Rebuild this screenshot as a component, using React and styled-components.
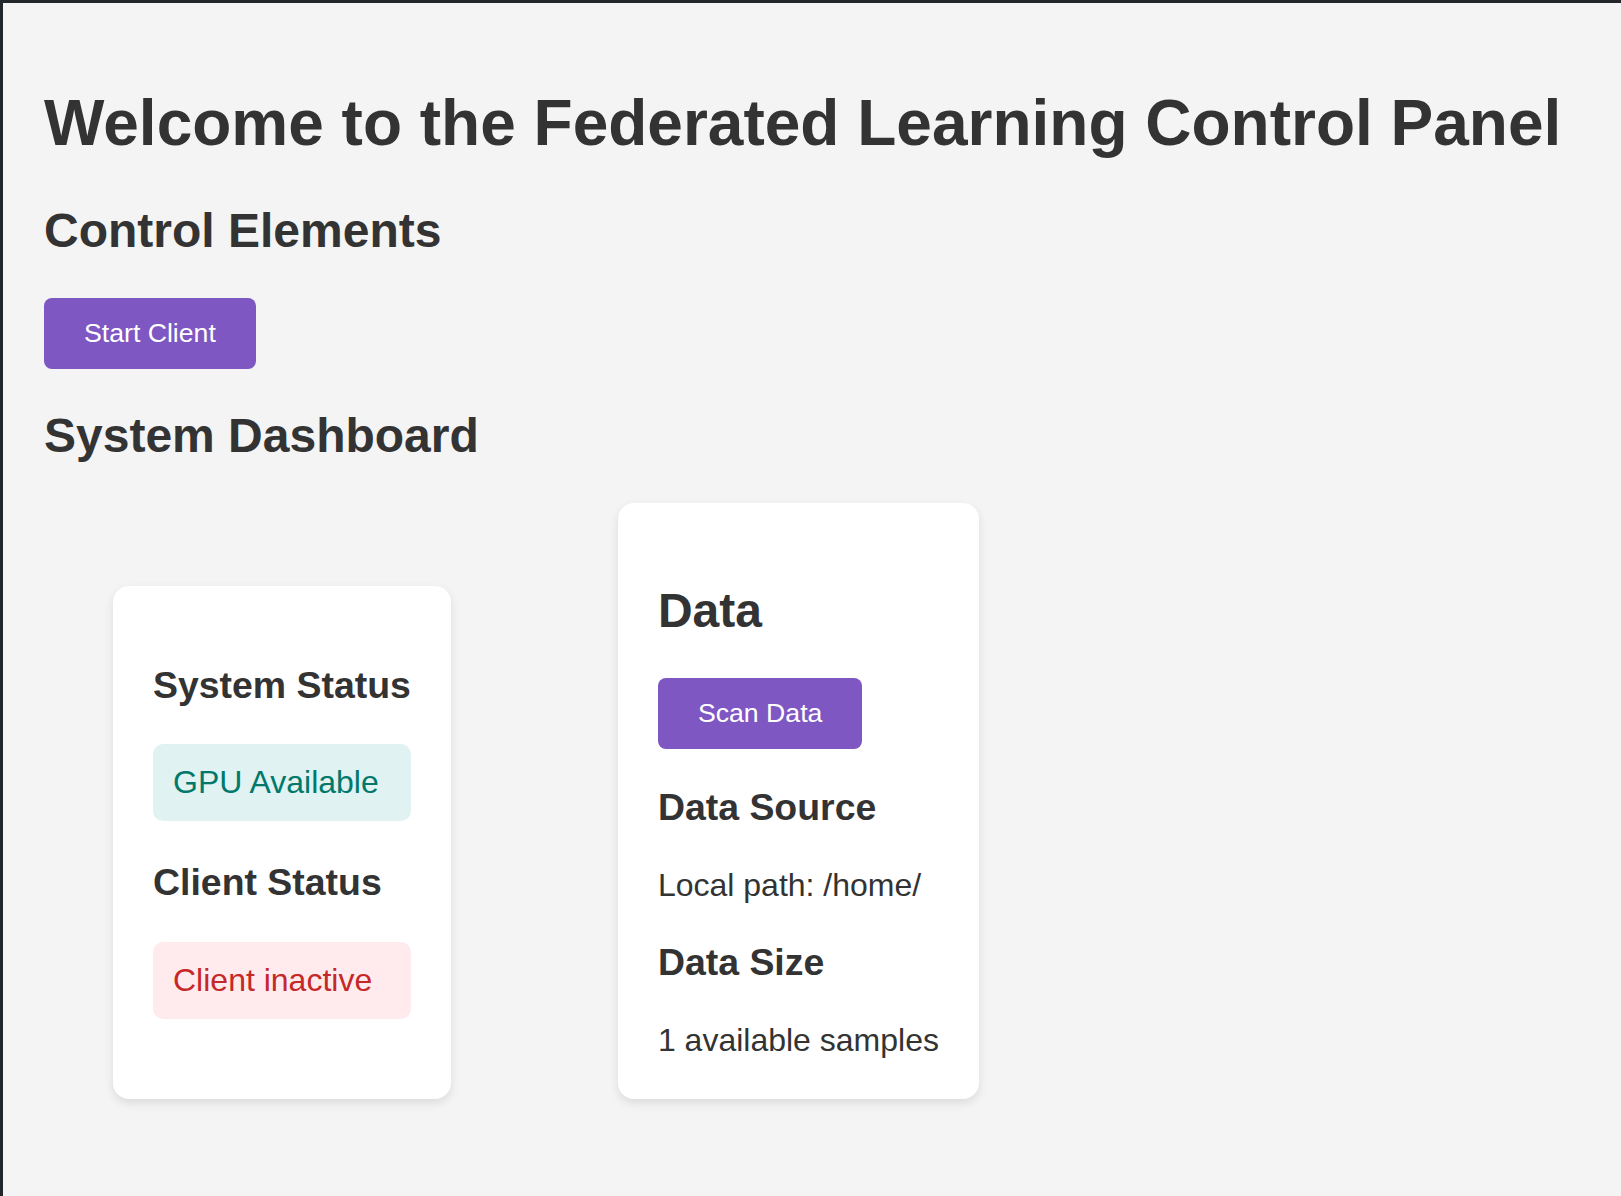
import React from 'react'
import styled, { createGlobalStyle } from 'styled-components'

const GlobalStyle = createGlobalStyle`
  html {
    background: #f4f4f4;
  }
  body {
    margin: 0;
    min-height: 100vh;
    box-sizing: border-box;
    padding: 40px 40px 40px 41px;
    border-top: 3px solid #22272c;
    border-left: 3px solid #22272c;
    background: #f4f4f4;
    color: #333;
    font-family: "Liberation Sans", Arial, sans-serif;
    font-size: 32px;
  }
`

const Title = styled.h1`
  font-size: 64px;
  font-weight: bold;
  margin: 42.88px 0;
`

const SectionTitle = styled.h2`
  font-size: 48px;
  font-weight: bold;
  margin: 39.84px 0;
`

const SubTitle = styled.h3`
  font-size: 37.44px;
  font-weight: bold;
  margin: 37.44px 0;
`

const Text = styled.p`
  margin: 37.44px 0 ${({ last }) => (last ? '0' : '37.44px')};
`

const Button = styled.button`
  background: #7e57c2;
  color: #fff;
  border: none;
  border-radius: 8px;
  padding: 20px 40px;
  font-family: "Liberation Sans", Arial, sans-serif;
  font-size: 26.67px;
  cursor: pointer;
`

const Dashboard = styled.div`
  display: flex;
  align-items: flex-end;
  gap: 167px;
  padding-left: 69px;
`

const Card = styled.div`
  background: #fff;
  border-radius: 16px;
  padding: 40px;
  box-shadow: 0 4px 10px rgba(0, 0, 0, 0.1);
`

const Status = styled.div`
  padding: 20px;
  border-radius: 10px;
  margin: 20px 0 40px;
  background: ${({ ok }) => (ok ? '#e0f2f1' : '#ffebee')};
  color: ${({ ok }) => (ok ? '#00796b' : '#c62828')};
`

const App = () => (
  <>
    <GlobalStyle />
    <Title>Welcome to the Federated Learning Control Panel</Title>
    <SectionTitle>Control Elements</SectionTitle>
    <div>
      <Button>Start Client</Button>
    </div>
    <SectionTitle>System Dashboard</SectionTitle>
    <Dashboard>
      <Card>
        <SubTitle>System Status</SubTitle>
        <Status ok>GPU Available</Status>
        <SubTitle>Client Status</SubTitle>
        <Status>Client inactive</Status>
      </Card>
      <Card>
        <SectionTitle>Data</SectionTitle>
        <div>
          <Button>Scan Data</Button>
        </div>
        <SubTitle>Data Source</SubTitle>
        <Text>Local path: /home/</Text>
        <SubTitle>Data Size</SubTitle>
        <Text last>1 available samples</Text>
      </Card>
    </Dashboard>
  </>
)

export default App
